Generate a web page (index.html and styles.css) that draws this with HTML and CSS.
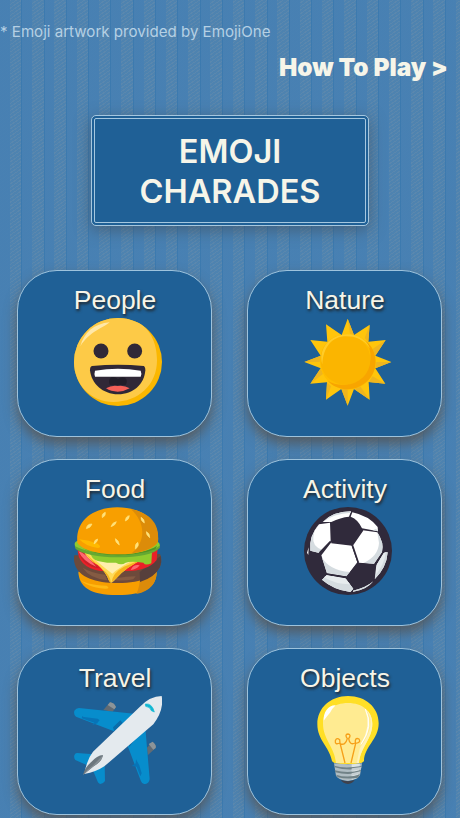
FILE: index.html
```html
<!DOCTYPE html>
<html lang="en">
<head>
<meta charset="utf-8">
<title>Emoji Charades</title>
<link rel="stylesheet" href="styles.css">
</head>
<body>
<main class="screen">
  <p class="credit">* Emoji artwork provided by EmojiOne</p>
  <a class="how" href="#how">How To Play &gt;</a>
  <h1 class="title">EMOJI<br>CHARADES</h1>
  <nav class="grid">
    <a class="card" href="#people">
      <span class="label">People</span>
      <svg class="icon" viewBox="192 175 264 264">
        <circle cx="324" cy="307" r="132" fill="#fab700"/>
        <path d="M324 175A132 132 0 0 0 192 307C192 375 244 427 310 427C386 427 441 375 441 302C441 246 417 203 381 188Q355 175 324 175Z" fill="#fdca47"/>
        <path d="M211 260C222 219 252 192 299 188C281 204 238 216 211 260Z" fill="#ffe8a8"/>
        <circle cx="273" cy="274" r="22.500" fill="#302837"/>
        <circle cx="374" cy="274" r="22.500" fill="#302837"/>
        <path d="M246 319Q324 311 401 319Q406 321 406 332C403 374 370 404 324 404C278 404 244 372 240 332Q240 320 246 319Z" fill="#302837"/>
        <path d="M255 333Q324 321 392 333Q396 341 392 351H255Q252 342 255 333Z" fill="#fff"/>
        <path d="M300 376Q293 361 304 353Q315 350 324 358Q334 350 345 354Q355 363 347 376Z" fill="#211d29"/>
        <path d="M288 386Q304 376 323 379Q343 376 359 386Q342 396 323 396Q303 396 288 386Z" fill="#f45f57"/>
      </svg>
    </a>
    <a class="card" href="#nature">
      <span class="label">Nature</span>
      <svg class="icon" viewBox="192 175 264 264">
        <path d="M323 177L342 226L389 195L385 246L437 241L406 288L454 307L406 326L436 372L386 367L389 420L342 388L323 438L304 388L258 420L261 368L211 372L242 326L193 307L242 288L211 241L262 246L258 194L305 226Z" fill="#ffc50b"/>
        <path d="M323 177L342 226L330 222ZM389 195L385 246L374 235ZM437 241L406 288L398 268ZM454 307L406 326L409 307ZM436 372L386 367L398 350ZM389 420L342 388L360 379ZM323 438L304 388H323ZM258 420L261 368L273 380ZM211 372L242 326L249 343ZM193 307L242 288L239 307Z" fill="#efb51e"/>
        <circle cx="324" cy="307" r="83" fill="#ffbd00"/>
        <path d="M377 243C419 277 415 342 374 371C341 398 290 393 263 363C297 384 340 377 367 348C397 317 399 277 377 243Z" fill="#f8a500"/>
        <circle cx="316" cy="300" r="75" fill="#fbb500"/>
        <path d="M247 314C234 270 267 226 320 224C355 223 382 244 391 268C371 239 347 230 319 230C276 230 250 262 247 314Z" fill="#ffcc28"/>
      </svg>
    </a>
    <a class="card" href="#food">
      <span class="label">Food</span>
      <svg class="icon" viewBox="192 171 264 264">
        <path d="M205 365H440C440 411 405 435 322 435C239 435 207 410 205 365Z" fill="#f79e00"/>
        <path d="M390 374L440 364C440 398 423 424 379 432Q391 406 390 374Z" fill="#dc8b0a"/>
        <path d="M209 386Q222 404 290 407Q303 417 285 416Q226 410 209 386Z" fill="#ffb914"/>
        <path d="M193 316Q190 332 195 344C207 381 255 399 324 399C398 399 443 376 452 345Q457 326 450 312Z" fill="#6d4a3b"/>
        <path d="M389 366L452 318Q456 335 449 352Q434 383 390 396Z" fill="#573f3c"/>
        <path d="M218 353Q246 370 285 374L292 391Q239 385 218 353ZM318 385Q348 379 377 379L370 388Q347 393 318 391Z" fill="#855b43"/>
        <path d="M203 296Q202 350 270 363L335 363Q412 366 440 330L443 294Z" fill="#eb2028"/>
        <path d="M204 301L223 307Q238 332 269 355Q218 352 204 301Z" fill="#c91f27"/>
        <path d="M205 304Q220 307 238 327Q252 342 259 350Q220 336 205 304ZM365 355Q373 342 389 346Q380 359 362 360Z" fill="#ff6870"/>
        <path d="M220 303L401 326Q344 354 320 384Q309 397 304 398Q298 397 292 380Q276 350 248 335Q229 321 220 303Z" fill="#ffdb56"/>
        <path d="M236 309L369 331Q326 354 307 371Q286 356 264 337Z" fill="#ffefad"/>
        <path d="M220 303Q257 340 279 359Q300 373 303 398Q297 397 292 380Q276 350 248 335ZM304 398Q309 367 342 350L401 326Q344 354 320 384Z" fill="#f6b41d"/>
        <path d="M230 303Q320 323 426 307L424 340Q406 348 400 338Q363 333 347 338Q334 347 318 338Q299 340 275 335Q250 333 243 316Z" fill="#8ecb2f"/>
        <path d="M202 273Q190 282 197 297C217 312 264 322 324 322C387 322 431 313 449 294Q452 284 443 277Z" fill="#65a832"/>
        <path d="M201 273Q190 278 196 289C223 304 268 312 323 312C383 312 431 301 449 287Q450 278 443 276Z" fill="#8ecb2f"/>
        <path d="M203 286C235 306 278 313 324 313C376 313 418 303 441 287L436 298Q389 315 324 316Q247 315 203 286Z" fill="#529224"/>
        <path d="M202 278C196 212 249 172 322 172C395 172 450 210 444 275C430 301 371 314 323 313C268 312 218 302 202 278Z" fill="#f89f00"/>
        <path d="M363 178C425 190 449 225 444 275Q431 300 365 310C409 276 407 218 363 178Z" fill="#dc8c09"/>
        <path d="M208 268Q237 270 263 281Q277 291 264 294Q226 289 208 268Z" fill="#ffb900"/>
        <g fill="#ffe178" stroke="#ffe178" stroke-width="2">
          <path d="M229 236Q231 221 246 222Q242 234 229 236ZM277 203Q274 191 286 187Q288 198 277 203ZM303 230Q307 217 319 215Q317 226 303 230ZM346 213Q347 198 358 197Q358 208 346 213ZM403 219Q391 212 393 202Q404 207 403 219ZM419 263Q408 254 409 245Q420 249 419 263ZM252 282Q252 269 263 267Q263 276 252 282ZM328 285Q315 277 316 266Q327 271 328 285ZM376 297Q374 282 383 277Q389 288 376 297Z"/>
        </g>
      </svg>
    </a>
    <a class="card" href="#activity">
      <span class="label">Activity</span>
      <svg class="icon" viewBox="192 171 264 264">
        <circle cx="324" cy="303" r="132" fill="#302a3b"/>
        <path d="M248 216Q279 184 333 184L327 200Q302 202 274 216ZM337 187Q386 197 413 231L414 244L366 235Q355 209 332 200ZM237 223L270 218L272 274L238 309L211 302Q206 258 237 223ZM368 241L412 247Q433 279 426 306L402 341L356 338L337 285ZM274 277L334 285L352 337L320 379L261 370L244 316ZM431 310Q436 305 443 307Q440 352 404 388L408 348ZM260 376L316 385L340 416L331 426Q280 419 246 389ZM339 422Q377 414 400 394Q378 421 339 425ZM206 292L205 315L201 308Z" fill="#fff"/>
        <path d="M248 216Q280 191 333 188V184Q279 184 248 216ZM237 223Q207 259 211 302L238 309L246 299Q216 289 220 261Q222 239 237 223ZM245 320Q265 360 330 366L320 379L261 370ZM408 236L414 244L399 241ZM412 247Q433 279 426 306L402 341L370 339Q415 319 417 279ZM431 310Q436 305 443 307Q440 352 404 388L408 348ZM260 376L316 385L340 416L331 426Q280 419 246 389ZM339 422Q377 414 400 394Q378 421 339 425Z" fill="#d5dce0"/>
        <path d="M431 310L437 306Q435 341 406 376L408 348ZM260 376L316 385L330 403Q286 403 252 382Z" fill="#e7ecee"/>
        <path d="M353 338L409 344L404 386Q380 410 342 417L318 381Z" fill="#302a3b"/>
        <path d="M238 309L272 274M337 285L274 277M337 285L355 338M368 240L337 285M318 382L260 372" stroke="#302a3b" stroke-width="5" fill="none"/>
      </svg>
    </a>
    <a class="card" href="#travel">
      <span class="label">Travel</span>
      <svg class="icon" viewBox="192 168 264 264">
        <path d="M280 210L300 187Q312 188 318 201L308 215ZM411 323L428 305Q440 315 437 324L413 346Z" fill="#626b73"/>
        <path d="M293 195L300 187Q312 188 318 201L313 208ZM416 312L428 305Q440 315 437 324L430 329Z" fill="#8b9499"/>
        <path d="M207 204L372 221L312 274L198 230Q190 225 193 212Q198 204 207 204ZM405 252L419 417Q417 430 406 432Q396 433 393 424L350 310ZM201 339L251 343L232 376L196 360Q191 354 193 346Q196 339 201 339ZM284 374L285 423Q279 432 271 432Q264 431 261 420L247 387Z" fill="#078dcc"/>
        <path d="M217 229Q222 234 245 239L264 249L246 256L253 248L215 235ZM263 236L269 241L262 248L241 239L219 235L216 230ZM378 358L388 376L395 400L391 409L380 380L365 378L377 370Z" fill="#0874b7"/>
        <path d="M309 262L331 241L338 249L313 275ZM353 302L370 286L377 295L358 321Z" fill="#0b6daa"/>
        <path d="M455 168C461 200 449 229 430 253L283 379Q258 396 223 402Q231 357 249 335L389 201Q420 168 455 168Z" fill="#e4eaee"/>
        <path d="M406 192Q426 189 433 216L424 212Q420 200 407 199Z" fill="#10b8d3" stroke="#10b8d3" stroke-width="2"/>
        <path d="M219 405Q224 383 243 367Q261 346 279 345Q276 365 249 380Q233 393 219 405Z" fill="#6c777e"/>
        <path d="M219 405Q231 388 250 375L279 345Q276 365 249 380Q233 393 219 405Z" fill="#858e94"/>
      </svg>
    </a>
    <a class="card" href="#objects">
      <span class="label">Objects</span>
      <svg class="icon" viewBox="192 168 264 264">
        <path d="M324 168C271 168 232 204 232 252C232 301 267 318 276 363Q280 373 324 373Q367 373 372 363C373 319 416 299 416 250C416 202 377 168 324 168Z" fill="#ffdf26"/>
        <path d="M324 189C281 189 249 214 249 251C249 298 284 321 288 369H357C361 321 397 298 397 251C397 214 368 189 324 189Z" fill="#ffeb91"/>
        <path d="M251 242C249 218 265 195 287 196Q275 207 270 218Q261 228 251 242Z" fill="#fff"/>
        <path d="M376 207C413 250 378 296 359 326L350 369H357C361 321 397 298 397 251Q397 222 376 207Z" fill="#fff2b8"/>
        <path d="M376 207Q398 258 363 313Q403 260 376 207Z" fill="#fff" stroke="#fff" stroke-width="2"/>
        <path d="M315 369L300 309Q284 316 286 302Q290 291 299 299L300 311Q316 318 322 296Q313 283 324 282Q335 284 326 296Q329 317 346 309Q344 291 357 297Q364 308 347 310L333 369" fill="none" stroke="#f6a019" stroke-width="4"/>
        <path d="M282 370Q324 375 366 370L360 406Q351 420 324 423Q296 420 288 407Z" fill="#b0bdc3"/>
        <path d="M335 373L360 371L353 414L335 419Z" fill="#dbe3e5"/>
        <path d="M283 377Q312 387 365 378L363 385Q323 394 284 382ZM284 391Q325 402 363 390L361 397Q324 407 286 397ZM288 404Q324 416 360 403L354 413Q324 419 293 412Z" fill="#718287"/>
        <path d="M335 385L364 381L362 388L335 393ZM335 400L361 394L359 401L335 407Z" fill="#c5ced2"/>
        <path d="M302 420Q324 427 344 420Q338 431 324 432Q309 431 302 420Z" fill="#40414b"/>
      </svg>
    </a>
  </nav>
</main>
</body>
</html>
```
FILE: styles.css
```css
* { box-sizing: border-box; }
body {
  margin: 0;
  height: 818px;
  overflow: hidden;
  font-family: Inter, "Liberation Sans", sans-serif;
  color: #f6f5e9;
  background-color: #4e83b0;
  background-image:
    repeating-linear-gradient(90deg, rgba(71, 128, 179, .92) 0 9.8px, transparent 9.8px 21.3px, rgba(58, 121, 175, .9) 21.3px 22.3px),
    repeating-linear-gradient(145deg, rgba(150, 158, 165, .17) 0 1px, transparent 1px 3px);
}
.screen {
  display: flex;
  flex-direction: column;
  height: 818px;
  padding-top: 22px;
}
.credit {
  margin: 0;
  height: 20px;
  font-size: 15.1px;
  line-height: 20px;
  color: #b5d0e4;
  white-space: nowrap;
}
.how {
  align-self: flex-end;
  height: 32px;
  margin: 9px 12px 0 0;
  font-size: 24.4px;
  font-weight: 900;
  line-height: 32px;
  white-space: nowrap;
  color: inherit;
  text-decoration: none;
}
.title {
  align-self: center;
  flex: none;
  width: 278px;
  height: 111px;
  margin: 32px 0 0;
  padding: 13px 0 11px;
  border: 4px double #a5c7df;
  border-radius: 5px;
  background: #1f6096;
  box-shadow: 0 4px 16px rgba(60, 70, 80, .55);
  font-size: 32.5px;
  font-weight: 640;
  line-height: 40px;
  text-align: center;
}
.grid {
  display: grid;
  grid-template-columns: 195px 195px;
  grid-auto-rows: 167px;
  justify-content: center;
  gap: 22px 35px;
  margin: 44px 1px 0 0;
}
.card {
  display: flex;
  flex-direction: column;
  align-items: center;
  padding-top: 13px;
  border: 1px solid #9dc3dd;
  border-radius: 40px;
  background: #1f6096;
  box-shadow: 0 7px 13px rgba(85, 85, 85, .85);
  color: inherit;
  text-decoration: none;
}
.label {
  height: 34px;
  padding-left: 1px;
  font-family: "Liberation Sans", Arial, sans-serif;
  font-size: 26.5px;
  line-height: 32px;
  text-shadow: 1px 2px 3px #222;
}
.icon {
  width: 88px;
  height: 88px;
  margin-left: 6px;
}
```
